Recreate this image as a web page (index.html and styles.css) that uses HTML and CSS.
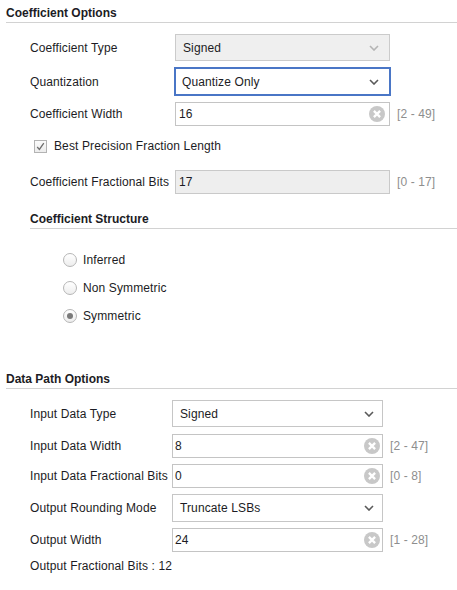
FILE: index.html
```html
<!DOCTYPE html>
<html>
<head>
<meta charset="utf-8">
<link rel="stylesheet" href="styles.css">
</head>
<body>
<div class="page">
  <div class="title title-main">Coefficient Options</div>

  <div class="row r1">
    <div class="label">Coefficient Type</div>
    <div class="box select disabled">
      <span>Signed</span>
      <svg class="chev" width="10" height="6" viewBox="0 0 10 6"><path d="M1 1 L5 5 L9 1" fill="none" stroke="#b4b4b4" stroke-width="1.6"/></svg>
    </div>
  </div>

  <div class="row r2">
    <div class="label">Quantization</div>
    <div class="box select focused">
      <span>Quantize Only</span>
      <svg class="chev" width="10" height="6" viewBox="0 0 10 6"><path d="M1 1 L5 5 L9 1" fill="none" stroke="#5a5a5a" stroke-width="1.6"/></svg>
    </div>
  </div>

  <div class="row r3">
    <div class="label">Coefficient Width</div>
    <div class="box input">
      <span>16</span>
      <svg class="clear" width="16" height="16" viewBox="0 0 16 16"><circle cx="8" cy="8" r="8" fill="#c8c8c8"/><path d="M4.9 4.9 L11.1 11.1 M11.1 4.9 L4.9 11.1" stroke="#fff" stroke-width="2.3"/></svg>
    </div>
    <div class="range">[2 - 49]</div>
  </div>

  <div class="row r-check">
    <div class="checkbox"><svg width="11" height="11" viewBox="0 0 11 11"><path d="M2.2 6 L4.4 8.4 L8.8 2.2" fill="none" stroke="#6e6e6e" stroke-width="1.3"/></svg></div>
    <div class="check-label">Best Precision Fraction Length</div>
  </div>

  <div class="row r-frac">
    <div class="label">Coefficient Fractional Bits</div>
    <div class="box input readonly"><span>17</span></div>
    <div class="range">[0 - 17]</div>
  </div>

  <div class="title title-sub">Coefficient Structure</div>

  <div class="radios">
    <div class="radio-row"><div class="radio"></div><span>Inferred</span></div>
    <div class="radio-row"><div class="radio"></div><span>Non Symmetric</span></div>
    <div class="radio-row"><div class="radio on"><div class="dot"></div></div><span>Symmetric</span></div>
  </div>

  <div class="title title-data">Data Path Options</div>

  <div class="row lower d1">
    <div class="label">Input Data Type</div>
    <div class="box select">
      <span>Signed</span>
      <svg class="chev" width="10" height="6" viewBox="0 0 10 6"><path d="M1 1 L5 5 L9 1" fill="none" stroke="#5a5a5a" stroke-width="1.6"/></svg>
    </div>
  </div>

  <div class="row lower d2">
    <div class="label">Input Data Width</div>
    <div class="box input">
      <span>8</span>
      <svg class="clear" width="16" height="16" viewBox="0 0 16 16"><circle cx="8" cy="8" r="8" fill="#c8c8c8"/><path d="M4.9 4.9 L11.1 11.1 M11.1 4.9 L4.9 11.1" stroke="#fff" stroke-width="2.3"/></svg>
    </div>
    <div class="range">[2 - 47]</div>
  </div>

  <div class="row lower d3">
    <div class="label">Input Data Fractional Bits</div>
    <div class="box input">
      <span>0</span>
      <svg class="clear" width="16" height="16" viewBox="0 0 16 16"><circle cx="8" cy="8" r="8" fill="#c8c8c8"/><path d="M4.9 4.9 L11.1 11.1 M11.1 4.9 L4.9 11.1" stroke="#fff" stroke-width="2.3"/></svg>
    </div>
    <div class="range">[0 - 8]</div>
  </div>

  <div class="row lower d4">
    <div class="label">Output Rounding Mode</div>
    <div class="box select">
      <span>Truncate LSBs</span>
      <svg class="chev" width="10" height="6" viewBox="0 0 10 6"><path d="M1 1 L5 5 L9 1" fill="none" stroke="#5a5a5a" stroke-width="1.6"/></svg>
    </div>
  </div>

  <div class="row lower d5">
    <div class="label">Output Width</div>
    <div class="box input">
      <span>24</span>
      <svg class="clear" width="16" height="16" viewBox="0 0 16 16"><circle cx="8" cy="8" r="8" fill="#c8c8c8"/><path d="M4.9 4.9 L11.1 11.1 M11.1 4.9 L4.9 11.1" stroke="#fff" stroke-width="2.3"/></svg>
    </div>
    <div class="range">[1 - 28]</div>
  </div>

  <div class="out-frac">Output Fractional Bits : 12</div>
</div>
</body>
</html>
```
FILE: styles.css
```css
html, body {
  margin: 0;
  padding: 0;
  background: #ffffff;
}
body {
  font-family: "Liberation Sans", Arial, sans-serif;
  font-size: 12px;
  letter-spacing: 0.12px;
  color: #1c1c24;
}
.page {
  width: 457px;
  height: 590px;
  overflow: hidden;
}
.title {
  font-weight: bold;
  letter-spacing: 0;
  line-height: 14px;
  padding-top: 1px;
  padding-bottom: 2px;
  border-bottom: 1px solid #d2d2d2;
}
.title-main {
  margin-left: 6px;
  padding-top: 6px;
}
.title-sub {
  margin-left: 30px;
  margin-top: 17px;
}
.title-data {
  margin-left: 6px;
  margin-top: 48px;
}
.row {
  display: flex;
  align-items: center;
  padding-left: 30px;
}
.label {
  width: 145px;
  flex: none;
  line-height: 14px;
  white-space: nowrap;
}
.lower .label {
  width: 142px;
}
.box {
  box-sizing: border-box;
  flex: none;
  display: flex;
  align-items: center;
  justify-content: space-between;
  border: 1px solid #c6c6c6;
  background: #ffffff;
  width: 215px;
  line-height: 14px;
}
.lower .box {
  width: 211px;
}
.select {
  height: 27px;
  padding-left: 7px;
  padding-right: 10px;
}
.lower .select {
  padding-left: 7px;
  padding-right: 8px;
}
.select.disabled {
  background: #efefef;
  border-color: #cbcbcb;
}
.select.focused {
  height: 29px;
  width: 217px;
  margin-left: -1px;
  border: 2px solid #4a76c6;
  padding-left: 6px;
  padding-right: 10px;
}
.input {
  height: 24px;
  padding-left: 3px;
  padding-right: 4px;
  border-color: #c4c4c4;
}
.lower .input {
  padding-left: 2px;
  padding-right: 2px;
}
.input.readonly {
  background: #eeeeee;
  border-color: #c9c9c9;
}
.chev, .clear {
  display: block;
  flex: none;
}
.range {
  margin-left: 7px;
  color: #8e8e8e;
  line-height: 14px;
}
.r1 { margin-top: 11px; }
.r2 { margin-top: 6px; }
.r3 { margin-top: 6px; }
.r-check {
  margin-top: 13px;
  padding-left: 34px;
  height: 14px;
}
.checkbox {
  box-sizing: border-box;
  width: 13px;
  height: 13px;
  border: 1px solid #b3b3b3;
  background: linear-gradient(#fbfbfb, #ececec);
  display: flex;
  align-items: center;
  justify-content: center;
}
.checkbox svg { display: block; }
.check-label {
  margin-left: 7px;
  line-height: 14px;
}
.r-frac { margin-top: 17px; }
.radios {
  padding-left: 63px;
  margin-top: 24px;
  display: flex;
  flex-direction: column;
  gap: 14px;
}
.radio-row {
  display: flex;
  align-items: center;
  height: 14px;
  line-height: 14px;
}
.radio {
  box-sizing: border-box;
  width: 14px;
  height: 14px;
  border-radius: 50%;
  border: 1px solid #b6b6b6;
  background: linear-gradient(#ffffff, #ededed);
  margin-right: 6px;
  display: flex;
  align-items: center;
  justify-content: center;
}
.dot {
  width: 6px;
  height: 6px;
  border-radius: 50%;
  background: #7a7a7a;
}
.d1 { margin-top: 11px; }
.d2 { margin-top: 7px; }
.d3 { margin-top: 6px; }
.d4 { margin-top: 6px; }
.d4 .select { height: 28px; }
.d5 { margin-top: 6px; }
.out-frac {
  padding-left: 30px;
  margin-top: 7px;
  line-height: 14px;
}
```
